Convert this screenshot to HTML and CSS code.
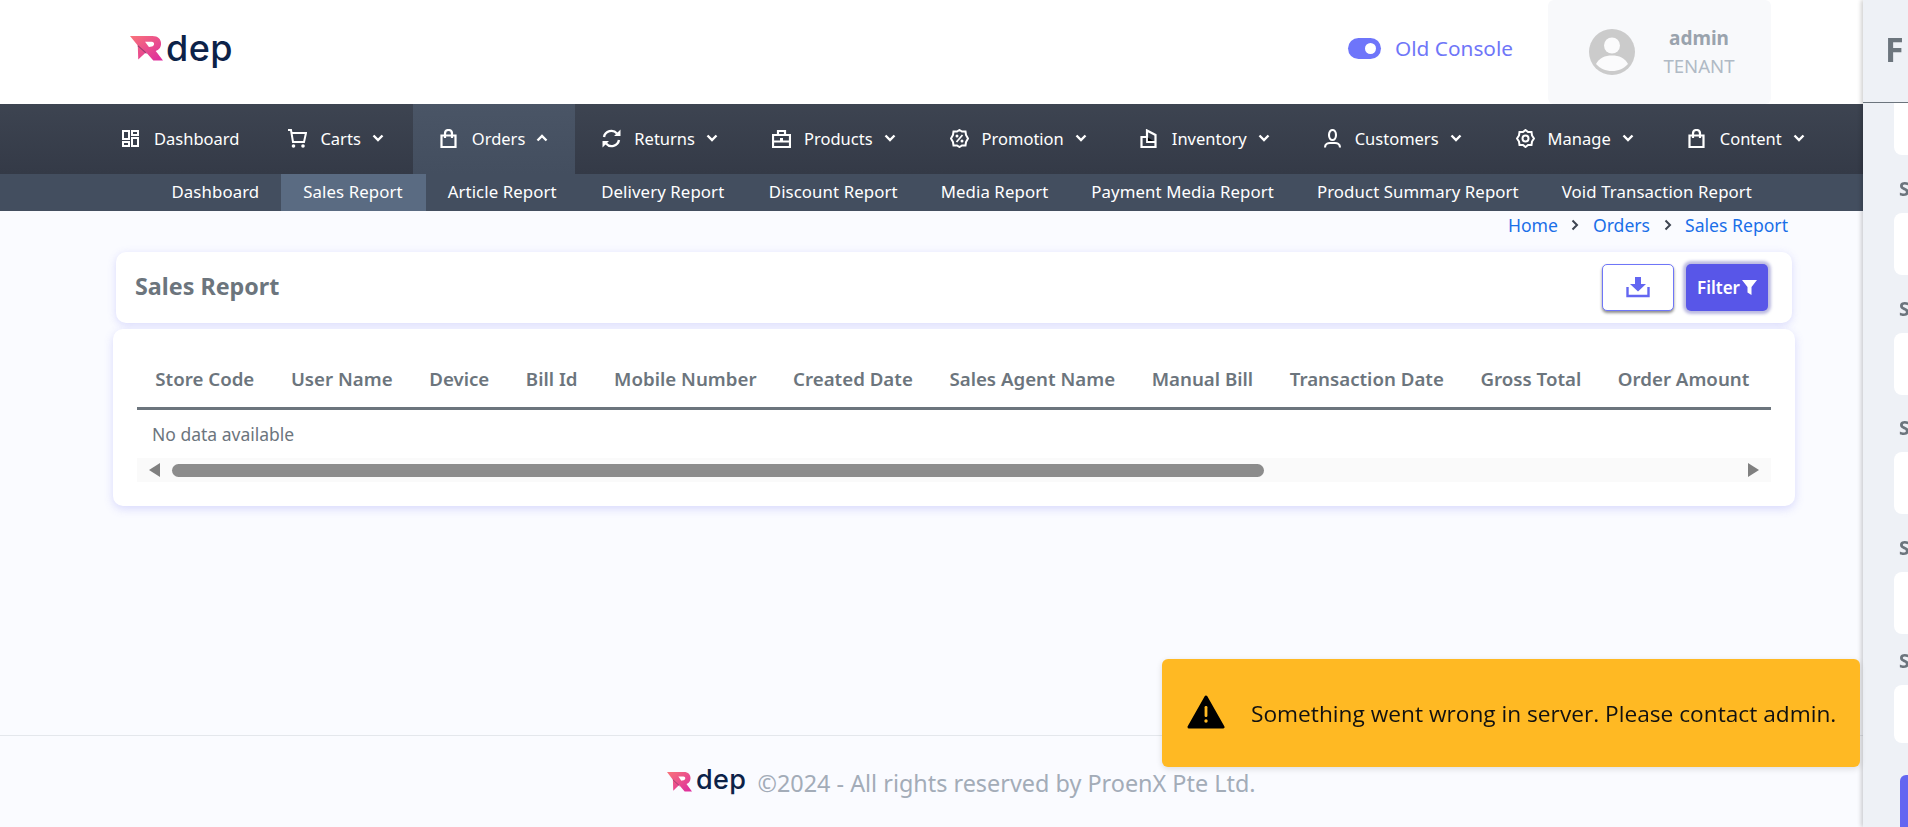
FILE: index.html
```html
<!DOCTYPE html>
<html lang="en">
<head>
<meta charset="utf-8">
<title>Sales Report</title>
<link rel="stylesheet" href="styles.css">
</head>
<body>
<svg class="defs" width="0" height="0" aria-hidden="true">
  <defs>
    <linearGradient id="rd" x1="0" y1="0" x2="1" y2="1">
      <stop offset="0" stop-color="#f9747a"/><stop offset="1" stop-color="#dc2a9f"/>
    </linearGradient>
    <symbol id="i-mark" viewBox="0 0 34 26" preserveAspectRatio="none">
      <path fill="url(#rd)" d="M0 0H23C29 0 32 3.500 32 8C32 12 29.500 14.500 26.500 15.500L34 25.500H24L16.500 17L8.500 24.500L8 10Z"/>
      <path fill="#fff" d="M15.500 6H22.500C24 6 24.800 7 24.800 8.200C24.800 9.600 23.800 10.400 22.500 10.800L19.500 11.500Z"/>
      <path fill="none" stroke="#9a3b70" stroke-width="1.200" d="M8 10L17 18"/>
    </symbol>
    <symbol id="i-dash" viewBox="0 0 19 19"><g fill="none" stroke="currentColor" stroke-width="2"><rect x="1" y="2" width="6" height="8"/><rect x="10" y="2" width="6" height="4"/><rect x="1" y="13" width="6" height="4"/><rect x="10" y="9" width="6" height="8"/></g></symbol>
    <symbol id="i-cart" viewBox="0 0 19 19"><path fill="none" stroke="currentColor" stroke-width="2" d="M0 1H3L5 13H16L18 4H3.500"/><circle cx="5.500" cy="17" r="1.800" fill="currentColor"/><circle cx="15" cy="17" r="1.800" fill="currentColor"/></symbol>
    <symbol id="i-bag" viewBox="0 0 19 19"><path fill="none" stroke="currentColor" stroke-width="2.200" d="M1.500 6.500H15.500V18H1.500ZM5 9V4.500C5 2.500 6.500 1 8.500 1S12 2.500 12 4.500V9"/></symbol>
    <symbol id="i-sync" viewBox="0 0 19 19"><path fill="none" stroke="currentColor" stroke-width="2.400" d="M2 8A7.500 7.500 0 0 1 15 4.500M17 11A7.500 7.500 0 0 1 4 14.500"/><path fill="currentColor" d="M12 7H18.500V0.500ZM7 12H0.500V18.500Z"/></symbol>
    <symbol id="i-case" viewBox="0 0 19 19"><path fill="none" stroke="currentColor" stroke-width="2.200" d="M1 6H18V18H1ZM1 12.500H18M6 6V2H13V6"/><rect x="8" y="9" width="3" height="4" fill="currentColor"/></symbol>
    <symbol id="i-promo" viewBox="0 0 19 19"><path fill="none" stroke="currentColor" stroke-width="2" d="M9.500 1L12 2.500L15.500 2.500L16 6L18 9.500L16 13L15.500 16.500L12 16.500L9.500 18L7 16.500L3.500 16.500L3 13L1 9.500L3 6L3.500 2.500L7 2.500Z"/><path stroke="currentColor" stroke-width="1.800" d="M12.500 6L6.500 13"/><circle cx="7" cy="7" r="1.500" fill="currentColor"/><circle cx="12" cy="12" r="1.500" fill="currentColor"/></symbol>
    <symbol id="i-inv" viewBox="0 0 19 19"><path fill="none" stroke="currentColor" stroke-width="2.200" d="M1.500 8H7V1.500L15.500 6V18H1.500Z"/><path stroke="currentColor" stroke-width="1.800" d="M7 8V13H15"/></symbol>
    <symbol id="i-user" viewBox="0 0 19 19"><g fill="none" stroke="currentColor" stroke-width="2.100"><ellipse cx="9.500" cy="6" rx="3.500" ry="5"/><path d="M2 18.500C2 15 5 14 7 14H12C14 14 17 15 17 18.500"/></g></symbol>
    <symbol id="i-gear" viewBox="0 0 19 19"><path fill="none" stroke="currentColor" stroke-width="2" d="M9.500 1L12 3L15.500 3L16 6.500L18 9.500L16 12.500L15.500 16L12 16L9.500 18L7 16L3.500 16L3 12.500L1 9.500L3 6.500L3.500 3L7 3Z"/><circle cx="9.500" cy="9.500" r="3" fill="none" stroke="currentColor" stroke-width="2"/></symbol>
    <symbol id="i-chev" viewBox="0 0 12 8"><path fill="none" stroke="currentColor" stroke-width="2.400" d="M1.500 1.500L6 6L10.500 1.500"/></symbol>
  </defs>
</svg>

<div class="page">
  <header class="topbar">
    <a class="logo">
      <svg class="logo-mark"><use href="#i-mark"/></svg>
      <span class="logo-text">dep</span>
    </a>
    <div class="top-right">
      <span class="toggle"><span class="toggle-knob"></span></span>
      <span class="console">Old Console</span>
      <div class="userbox">
        <svg class="avatar" viewBox="0 0 46 46">
          <circle cx="23" cy="23" r="23" fill="#cbcbcb"/>
          <circle cx="23" cy="16.500" r="8" fill="#fbfbfc"/>
          <path d="M7 35C10 29 16 26.500 23 26.500S36 29 39 35C35 39.500 29.500 42 23 42S11 39.500 7 35Z" fill="#fbfbfc"/>
        </svg>
        <div class="userinfo">
          <span class="uname">admin</span>
          <span class="urole">TENANT</span>
        </div>
      </div>
    </div>
  </header>

  <nav class="mainnav">
    <a class="nav-item no-caret"><svg class="nav-icon"><use href="#i-dash"/></svg><span>Dashboard</span></a>
    <a class="nav-item nudge-wide"><svg class="nav-icon"><use href="#i-cart"/></svg><span>Carts</span><svg class="chev"><use href="#i-chev"/></svg></a>
    <a class="nav-item active"><svg class="nav-icon"><use href="#i-bag"/></svg><span>Orders</span><svg class="chev up"><use href="#i-chev"/></svg></a>
    <a class="nav-item"><svg class="nav-icon"><use href="#i-sync"/></svg><span>Returns</span><svg class="chev"><use href="#i-chev"/></svg></a>
    <a class="nav-item"><svg class="nav-icon"><use href="#i-case"/></svg><span>Products</span><svg class="chev"><use href="#i-chev"/></svg></a>
    <a class="nav-item nudge-tight"><svg class="nav-icon"><use href="#i-promo"/></svg><span>Promotion</span><svg class="chev"><use href="#i-chev"/></svg></a>
    <a class="nav-item nudge-tight"><svg class="nav-icon"><use href="#i-inv"/></svg><span>Inventory</span><svg class="chev"><use href="#i-chev"/></svg></a>
    <a class="nav-item"><svg class="nav-icon"><use href="#i-user"/></svg><span>Customers</span><svg class="chev"><use href="#i-chev"/></svg></a>
    <a class="nav-item"><svg class="nav-icon"><use href="#i-gear"/></svg><span>Manage</span><svg class="chev"><use href="#i-chev"/></svg></a>
    <a class="nav-item"><svg class="nav-icon"><use href="#i-bag"/></svg><span>Content</span><svg class="chev"><use href="#i-chev"/></svg></a>
  </nav>

  <nav class="subnav">
    <a class="sub-item">Dashboard</a>
    <a class="sub-item active">Sales Report</a>
    <a class="sub-item nudge">Article Report</a>
    <a class="sub-item nudge">Delivery Report</a>
    <a class="sub-item">Discount Report</a>
    <a class="sub-item">Media Report</a>
    <a class="sub-item">Payment Media Report</a>
    <a class="sub-item">Product Summary Report</a>
    <a class="sub-item">Void Transaction Report</a>
  </nav>

  <main class="content">
    <div class="crumbs">
      <a>Home</a><svg class="crumb-sep" viewBox="0 0 8 12"><path fill="none" stroke="#3d4451" stroke-width="2" d="M1.500 1.500L6 6L1.500 10.500"/></svg>
      <a>Orders</a><svg class="crumb-sep" viewBox="0 0 8 12"><path fill="none" stroke="#3d4451" stroke-width="2" d="M1.500 1.500L6 6L1.500 10.500"/></svg>
      <a>Sales Report</a>
    </div>

    <section class="title-card">
      <h1 class="title">Sales Report</h1>
      <div class="actions">
        <button class="btn-download" type="button">
          <svg width="24" height="21" viewBox="0 0 24 21"><path fill="#6366f1" d="M9 0H15V7H20L12 14.500L4 7H9Z"/><path fill="none" stroke="#6366f1" stroke-width="2.400" d="M1.500 10V19H22.500V10"/></svg>
        </button>
        <button class="btn-filter" type="button">Filter<svg width="15" height="15" viewBox="0 0 15 15"><path fill="#fff" d="M0 0H15L9.500 7V15L5.500 12.500V7Z"/></svg></button>
      </div>
    </section>

    <section class="table-card">
      <table class="report">
        <thead>
          <tr>
            <th>Store Code</th><th>User Name</th><th>Device</th><th>Bill Id</th><th>Mobile Number</th><th>Created Date</th><th>Sales Agent Name</th><th>Manual Bill</th><th>Transaction Date</th><th>Gross Total</th><th>Order Amount</th>
          </tr>
        </thead>
        <tbody>
          <tr><td class="empty" colspan="11">No data available</td></tr>
        </tbody>
      </table>
      <div class="scrollbar">
        <span class="arrow left"></span>
        <span class="thumb"></span>
        <span class="arrow right"></span>
      </div>
    </section>
  </main>

  <footer class="footer">
    <svg class="foot-mark"><use href="#i-mark"/></svg>
    <span class="foot-logo">dep</span>
    <span class="foot-text">©2024 - All rights reserved by ProenX Pte Ltd.</span>
  </footer>
</div>

<aside class="drawer">
  <div class="drawer-head"><h2 class="drawer-title">F</h2></div>
  <div class="drawer-body">
    <div class="field bare"><span class="input"></span></div>
    <div class="field"><label>S</label><span class="input"></span></div>
    <div class="field"><label>S</label><span class="input"></span></div>
    <div class="field"><label>S</label><span class="input"></span></div>
    <div class="field"><label>S</label><span class="input"></span></div>
    <div class="field last"><label>S</label><span class="input"></span></div>
    <button class="apply" type="button"></button>
  </div>
</aside>

<div class="toast" role="alert">
  <svg class="toast-icon" viewBox="0 0 38 34"><path fill="#000" stroke="#000" stroke-width="3" stroke-linejoin="round" d="M19 2L36 32H2Z"/><rect x="17.600" y="11" width="2.800" height="11" rx="1.200" fill="#ffb923"/><circle cx="19" cy="26" r="1.700" fill="#ffb923"/></svg>
  <span class="toast-text">Something went wrong in server. Please contact admin.</span>
</div>
</body>
</html>
```

FILE: styles.css
```css
* { box-sizing: border-box; }
html, body { margin: 0; padding: 0; height: 100%; overflow: hidden; }
body {
  font-family: "Noto Sans", sans-serif;
  background: #fafbff;
  color: #6c757d;
}
.defs { position: absolute; }

.page { height: 827px; display: flex; flex-direction: column; }

/* header */
.topbar { height: 104px; flex: none; background: #fff; display: flex; align-items: center; justify-content: space-between; padding-left: 130px; }
.logo { display: flex; align-items: flex-start; height: 32px; }
.logo-mark { width: 33px; height: 25px; }
.logo-text { font-family: "Inter", sans-serif; font-size: 36px; font-weight: 500; line-height: 24px; color: #0c2248; letter-spacing: 0.400px; margin-left: 3px; }
.top-right { display: flex; align-items: center; height: 104px; padding-right: 137px; }
.toggle { width: 33px; height: 21px; border-radius: 11px; background: #6e75fa; display: flex; align-items: center; justify-content: flex-end; padding-right: 5px; margin-top: -7px; }
.toggle-knob { width: 11px; height: 11px; border-radius: 50%; background: #fff; }
.console { color: #6f76f8; font-size: 20.800px; margin-left: 14px; margin-top: -8px; width: 153px; white-space: nowrap; }
.userbox { width: 223px; height: 104px; background: #f8f9fb; border-radius: 6px; display: flex; align-items: center; padding-left: 41px; }
.avatar { width: 46px; height: 46px; }
.userinfo { display: flex; flex-direction: column; align-items: center; width: 128px; }
.uname { font-size: 19px; font-weight: 700; color: #9aa3ad; line-height: 24px; }
.urole { font-size: 18.600px; color: #b0bac5; line-height: 24px; margin-top: 4px; }

/* main nav */
.mainnav { height: 70px; flex: none; display: flex; padding-left: 95px; color: #fff; background: linear-gradient(#3d4451, #343a47); }
.nav-item { display: flex; align-items: center; padding: 0 27px 2px; font-size: 16.500px; }
.nav-item.no-caret { padding-right: 22px; }
.nav-item.nudge-wide { padding-right: 29px; }
.nav-item.nudge-tight { padding-right: 26px; }
.nav-item.active { background: linear-gradient(#4a5566, #434e5f); }
.nav-icon { width: 19px; height: 19px; margin-right: 13px; flex: none; }
.chev { width: 12px; height: 8px; margin-left: 11px; flex: none; }
.chev.up { transform: rotate(180deg); }

/* sub nav */
.subnav { height: 37px; flex: none; display: flex; padding-left: 150px; background: #434e5f; color: #fff; }
.sub-item { display: flex; align-items: center; padding: 0 21.500px 2px; font-size: 16.800px; letter-spacing: 0.100px; }
.sub-item.active { background: #5a6b82; padding-left: 22.500px; padding-right: 23.500px; }
.sub-item.nudge { padding-right: 23px; }

/* content */
.content { flex: 1; padding: 0 113px; }
.crumbs { height: 41px; display: flex; align-items: flex-start; justify-content: flex-end; padding: 4px 7px 0 0; font-size: 17.600px; line-height: 20px; color: #1a6fe8; }
.crumb-sep { width: 8px; height: 12px; margin: 4px 13.500px 0; }
.title-card { height: 71px; margin: 0 3px; background: #fff; border-radius: 10px; box-shadow: 0 2px 8px rgba(99, 102, 241, .22); display: flex; align-items: center; justify-content: space-between; padding: 0 24px 0 19px; }
.title { margin: 0 0 3px; font-size: 23.300px; font-weight: 700; color: #6c757d; }
.actions { display: flex; gap: 12px; }
.btn-download { width: 72px; height: 47px; background: #fff; border: 1px solid #6f76f8; border-radius: 5px; box-shadow: 0 2px 3px rgba(0, 0, 0, .45); display: flex; align-items: center; justify-content: center; padding: 0; }
.btn-filter { width: 82px; height: 47px; background: #5856e8; border: 0; border-radius: 5px; box-shadow: 0 0 3px 3px rgba(88, 86, 180, .4); color: #fff; font-family: inherit; font-size: 17px; font-weight: 600; display: flex; align-items: center; justify-content: center; gap: 2px; padding: 0; }

.table-card { height: 177px; margin-top: 6px; background: #fff; border-radius: 10px; box-shadow: 0 3px 10px rgba(99, 102, 241, .22); padding: 0 24px; }
.report { width: 100%; border-collapse: collapse; }
.report th { height: 79px; padding: 22px 18.300px 0; border-bottom: 3px solid #6c757d; text-align: left; font-size: 18.700px; font-weight: 600; color: #6c757d; white-space: nowrap; }
.report th:last-child { width: 100%; }
.report .empty { height: 50px; padding: 0 0 0 15px; font-size: 17.500px; color: #6c757d; }
.scrollbar { height: 24px; background: #fafafa; display: flex; align-items: center; position: relative; }
.thumb { width: 1092px; height: 13px; border-radius: 7px; background: #8c8c8c; margin-left: 35px; }
.arrow { position: absolute; top: 5px; width: 0; height: 0; border-top: 7px solid transparent; border-bottom: 7px solid transparent; }
.arrow.left { left: 12px; border-right: 11px solid #808080; }
.arrow.right { right: 12px; border-left: 11px solid #808080; }

/* footer */
.footer { height: 92px; flex: none; border-top: 1px solid #e4e7ec; display: flex; align-items: center; padding-left: 667px; }
.foot-mark { width: 25px; height: 20px; }
.foot-logo { font-family: "Inter", sans-serif; font-size: 27px; font-weight: 500; letter-spacing: 0.400px; line-height: 28px; color: #0c2248; margin: -4px 11px 0 4px; }
.foot-text { font-size: 23.400px; color: #a3acb8; margin-top: 3px; }

/* drawer */
.drawer { position: fixed; top: 0; left: 1863px; width: 420px; height: 827px; background: #eef1f6; box-shadow: -2px 0 4px rgba(0, 0, 0, .18); overflow: hidden; }
.drawer-head { height: 103px; border-bottom: 1px solid #6c757d; display: flex; align-items: center; padding-left: 22px; }
.drawer-title { margin: 0; font-size: 34px; font-weight: 700; color: #6c757d; margin-top: -4px; }
.drawer-body { padding: 0 0 0 31px; }
.field { display: flex; flex-direction: column; height: 119.500px; }
.field.bare { height: 53px; }
.field.last { height: 141px; }
.field label { font-size: 19px; font-weight: 700; color: #6c757d; height: 57px; padding: 21px 0 0 5px; line-height: 24px; }
.field.last label { height: 51px; padding-top: 15px; }
.input { display: block; height: 62px; background: #fff; border-radius: 8px; }
.field.bare .input { height: 52px; border-radius: 0 0 8px 8px; }
.field.last .input { height: 58px; }
.apply { display: block; width: 200px; height: 60px; margin: 0 0 0 6px; border: 0; border-radius: 6px; background: #6366f1; }

/* toast */
.toast { position: fixed; left: 1162px; top: 659px; width: 698px; height: 108px; background: #ffb923; border-radius: 6px; box-shadow: 0 2px 6px rgba(0, 0, 0, .12); display: flex; align-items: center; padding-left: 25px; }
.toast-icon { width: 38px; height: 34px; margin-top: -2px; flex: none; }
.toast-text { font-family: "Open Sans", sans-serif; font-size: 22.700px; color: #111; margin: 1px 0 0 26px; white-space: nowrap; }
```
